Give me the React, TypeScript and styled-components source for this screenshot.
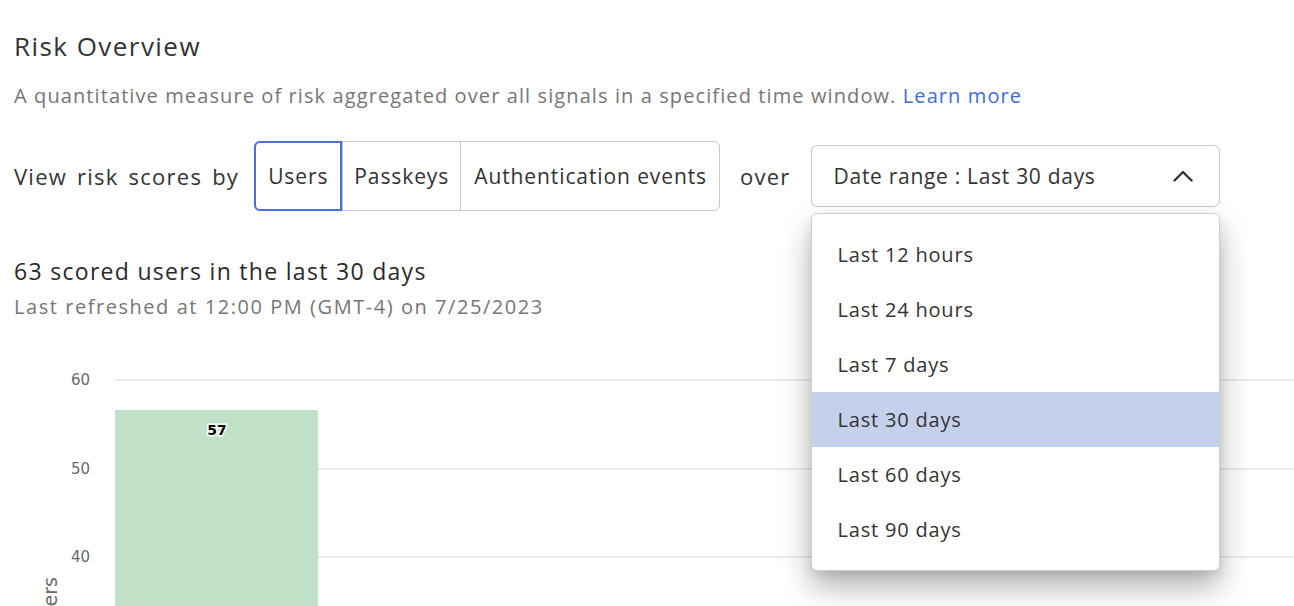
import React from "react";
import styled, { createGlobalStyle } from "styled-components";

const GlobalStyle = createGlobalStyle`
  html, body { margin: 0; padding: 0; background: #ffffff; }
  body { font-family: "Open Sans", "Noto Sans", sans-serif; color: #333333; }
  * { box-sizing: border-box; }
`;

const Page = styled.div`
  width: 1294px;
  height: 606px;
  overflow: hidden;
  position: relative;
`;

const Header = styled.header`
  padding: 27px 0 0 14px;
`;

const Title = styled.h1`
  margin: 0;
  font-size: 26px;
  line-height: 38px;
  font-weight: 400;
  letter-spacing: 1.45px;
  color: #333333;
`;

const Description = styled.p`
  margin: 18px 0 0;
  font-size: 20px;
  line-height: 26px;
  letter-spacing: 1.1px;
  color: #767676;
`;

const Link = styled.a`
  color: #3d6be0;
  text-decoration: none;
`;

const Controls = styled.div`
  display: flex;
  align-items: center;
  padding-left: 14px;
  margin-top: 32px;
`;

const Label = styled.span<{ $left?: number; $right?: number }>`
  font-size: 22px;
  letter-spacing: 1.25px;
  word-spacing: 3px;
  color: #333333;
  margin-left: ${(p) => p.$left ?? 0}px;
  margin-right: ${(p) => p.$right ?? 0}px;
`;

const Segmented = styled.div`
  display: flex;
  height: 70px;
  border: 1px solid #c6c6c6;
  border-radius: 6px;
`;

const Segment = styled.button<{ $active?: boolean }>`
  font-family: inherit;
  font-size: 21px;
  letter-spacing: 0.9px;
  color: #333333;
  background: #ffffff;
  border: none;
  border-left: 1px solid #c6c6c6;
  padding: 0 11px;
  margin: 0;
  cursor: pointer;
  &:first-child {
    border-radius: 6px 0 0 6px;
    margin: -1px 0 -1px -1px;
    border: 2px solid ${(p) => (p.$active ? "#4a6fe3" : "transparent")};
    padding: 0 12px;
  }
  &:last-child {
    border-radius: 0 6px 6px 0;
    padding: 0 12px 0 13px;
  }
`;

const SelectWrap = styled.div`
  position: relative;
  width: 409px;
  margin-left: 20px;
`;

const SelectButton = styled.button`
  width: 100%;
  height: 62px;
  display: flex;
  align-items: center;
  justify-content: space-between;
  padding: 0 26px 0 22px;
  background: #ffffff;
  border: 1px solid #c6c6c6;
  border-radius: 6px;
  font-family: inherit;
  font-size: 21px;
  letter-spacing: 0.7px;
  color: #333333;
`;

const Menu = styled.ul`
  position: absolute;
  left: 0;
  right: 0;
  top: 68px;
  margin: 0;
  padding: 13px 0;
  list-style: none;
  background: #ffffff;
  border: 1px solid #cfcfcf;
  border-radius: 6px;
  box-shadow: 0 16px 30px rgba(0, 0, 0, 0.3), 0 4px 10px rgba(0, 0, 0, 0.08);
  z-index: 10;
`;

const MenuItem = styled.li<{ $selected?: boolean }>`
  height: 55px;
  display: flex;
  align-items: center;
  padding: 0 26px;
  font-size: 20px;
  letter-spacing: 0.8px;
  color: #333333;
  background: ${(p) => (p.$selected ? "#c5d0ec" : "transparent")};
`;

const Summary = styled.section`
  padding: 45px 0 0 14px;
`;

const SummaryTitle = styled.h2`
  margin: 0;
  font-size: 23px;
  line-height: 30px;
  font-weight: 400;
  letter-spacing: 1.3px;
  color: #2a2a2a;
`;

const SummarySub = styled.p`
  margin: 8px 0 0;
  font-size: 20px;
  line-height: 26px;
  letter-spacing: 1.55px;
  color: #767676;
`;

const ChartBox = styled.div`
  margin-top: 16px;
  height: 270px;
`;

const Chevron = () => (
  <svg width="20" height="12" viewBox="0 0 20 12" fill="none">
    <path d="M1.5 10.5 L10 2 L18.5 10.5" stroke="#333" strokeWidth="2.4" strokeLinecap="round" strokeLinejoin="round" />
  </svg>
);

const ticks = [
  { v: 60, y: 44 },
  { v: 50, y: 133 },
  { v: 40, y: 221 },
];

const Chart = () => (
  <svg width="1294" height="270" viewBox="0 0 1294 270">
    {ticks.map((t) => (
      <g key={t.v}>
        <line x1="115" x2="1294" y1={t.y} y2={t.y} stroke="#e4e4e4" strokeWidth="1.5" />
        <text x="90" y={t.y + 5} textAnchor="end" fontSize="15" fill="#6b6b6b" fontFamily="DejaVu Sans, sans-serif">
          {t.v}
        </text>
      </g>
    ))}
    <rect x="115" y="74" width="203" height="200" fill="#c0e1c8" />
    <text
      x="217"
      y="99"
      textAnchor="middle"
      fontSize="14"
      fontWeight="700"
      fill="#000"
      stroke="#fff"
      strokeWidth="3"
      paintOrder="stroke"
      fontFamily="DejaVu Sans, sans-serif"
    >
      57
    </text>
    <text
      transform="translate(57 241) rotate(-90)"
      textAnchor="end"
      fontSize="19"
      fill="#6b6b6b"
      fontFamily="DejaVu Sans, sans-serif"
    >
      Number of users
    </text>
  </svg>
);

const options = ["Last 12 hours", "Last 24 hours", "Last 7 days", "Last 30 days", "Last 60 days", "Last 90 days"];

export default function App() {
  return (
    <Page>
      <GlobalStyle />
      <Header>
        <Title>Risk Overview</Title>
        <Description>
          A quantitative measure of risk aggregated over all signals in a specified time window. <Link href="#">Learn more</Link>
        </Description>
      </Header>
      <Controls>
        <Label $right={15}>View risk scores by</Label>
        <Segmented>
          <Segment $active>Users</Segment>
          <Segment>Passkeys</Segment>
          <Segment>Authentication events</Segment>
        </Segmented>
        <Label $left={20}>over</Label>
        <SelectWrap>
          <SelectButton>
            <span>Date range : Last 30 days</span>
            <Chevron />
          </SelectButton>
          <Menu>
            {options.map((o) => (
              <MenuItem key={o} $selected={o === "Last 30 days"}>
                {o}
              </MenuItem>
            ))}
          </Menu>
        </SelectWrap>
      </Controls>
      <Summary>
        <SummaryTitle>63 scored users in the last 30 days</SummaryTitle>
        <SummarySub>Last refreshed at 12:00 PM (GMT-4) on 7/25/2023</SummarySub>
      </Summary>
      <ChartBox>
        <Chart />
      </ChartBox>
    </Page>
  );
}
